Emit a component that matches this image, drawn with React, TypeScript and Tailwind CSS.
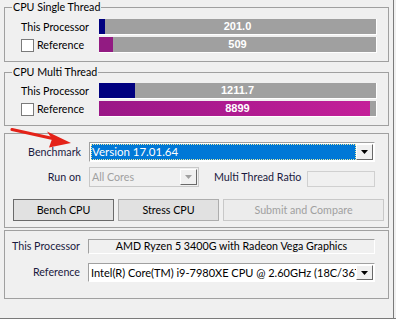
import React from "react";

const ui = "font-['Lato','Liberation_Sans',sans-serif] text-[10.7px]";

type BarData = { fill: number; color: string; value: string };

function Bar({ fill, color, value }: BarData) {
  return (
    <div className="relative h-[16px] w-[278px] shrink-0 border-r border-b border-white bg-[#a0a0a0]">
      <div className="h-full" style={{ width: fill, background: color }} />
      <span className="absolute inset-0 flex items-center justify-center font-['Liberation_Sans',sans-serif] text-[11px] font-bold text-white">
        {value}
      </span>
    </div>
  );
}

function Check() {
  return <span className="inline-block h-[13px] w-[13px] shrink-0 border border-[#7a7a7a] bg-white" />;
}

function Arrow({ disabled }: { disabled?: boolean }) {
  return (
    <svg width="7" height="4" viewBox="0 0 7 4">
      <path d="M0 0H7L3.5 4Z" fill={disabled ? "#a0a0a0" : "#000"} />
    </svg>
  );
}

function DropBtn({ disabled }: { disabled?: boolean }) {
  return (
    <div className="flex h-full w-[17px] shrink-0 items-center justify-center border border-t-white border-l-white border-r-[#696969] border-b-[#696969] bg-[#f0f0f0]">
      <Arrow disabled={disabled} />
    </div>
  );
}

function Group({ title, children, className }: { title?: string; children: React.ReactNode; className?: string }) {
  return (
    <fieldset className={"border border-[#a0a0a0] " + (className ?? "")}>
      {title && <legend className="ml-[7px] px-[1px] leading-[14px] whitespace-nowrap">{title}</legend>}
      {children}
    </fieldset>
  );
}

function BenchRows({ a, b }: { a: BarData; b: BarData }) {
  return (
    <div className="flex flex-col gap-[2px] pl-[16px]">
      <div className="flex h-[16px] items-center whitespace-nowrap">
        <span className="w-[78px] shrink-0">This Processor</span>
        <Bar {...a} />
      </div>
      <div className="flex h-[16px] items-center whitespace-nowrap">
        <Check />
        <span className="ml-[3px] w-[62px] shrink-0">Reference</span>
        <Bar {...b} />
      </div>
    </div>
  );
}

export default function App() {
  return (
    <div className={ui + " relative flex h-[323px] w-[396px] flex-col overflow-hidden bg-[#f0f0f0] text-black"}>
      <div className="mr-[2px] flex flex-1 flex-col border-r border-r-[#7a7a7a] pl-[4px] pr-[4px]">
        <Group title="CPU Single Thread" className="pt-[5px] pb-[8px]">
          <BenchRows
            a={{ fill: 6, color: "#00007f", value: "201.0" }}
            b={{ fill: 14, color: "#921b82", value: "509" }}
          />
        </Group>
        <Group title="CPU Multi Thread" className="mt-[3px] pt-[4px] pb-[8px]">
          <BenchRows
            a={{ fill: 36, color: "#00007f", value: "1211.7" }}
            b={{ fill: 271, color: "linear-gradient(90deg,#9a1787,#c41f99)", value: "8899" }}
          />
        </Group>
        <Group className="mt-[7px] pt-[8px] pb-[6px]">
          <div className="flex h-[20px] items-center whitespace-nowrap">
            <span className="w-[76px] shrink-0 text-right text-[#1a1a40]">Benchmark</span>
            <div className="ml-[8px] flex h-[20px] w-[286px] shrink-0 border border-[#a0a0a0] border-r-white border-b-white bg-white p-[1px]">
              <div className="flex flex-1 items-center bg-[#0078d7] pl-[1px] text-[11.5px] text-white outline outline-1 outline-dotted outline-[#e8e8a0] -outline-offset-1">
                Version 17.01.64
              </div>
              <DropBtn />
            </div>
          </div>
          <div className="mt-[5px] flex h-[20px] items-center whitespace-nowrap">
            <span className="w-[76px] shrink-0 text-right text-[#1a1a40]">Run on</span>
            <div className="ml-[8px] flex h-[20px] w-[110px] shrink-0 border border-[#c8c8c8] bg-[#f0f0f0] p-[1px]">
              <div className="flex flex-1 items-center pl-[1px] text-[#a0a0a0]">All Cores</div>
              <DropBtn disabled />
            </div>
            <span className="ml-[15px] w-[87px] shrink-0 text-[#1a1a40]">Multi Thread Ratio</span>
            <div className="ml-[6px] mt-[4px] h-[16px] w-[68px] shrink-0 border border-[#d0d0d0] bg-[#f0f0f0]" />
          </div>
          <div className="mt-[12px] flex gap-[4px] pl-[8px]">
            <button className="h-[22px] w-[101px] border border-[#6a6a6a] bg-[#e1e1e1]">Bench CPU</button>
            <button className="h-[22px] w-[101px] border border-[#adadad] bg-[#e1e1e1]">Stress CPU</button>
            <button className="h-[22px] w-[161px] border border-[#c8c8c8] bg-[#ececec] text-[#a0a0a0]">Submit and Compare</button>
          </div>
        </Group>
        <Group className="mt-[2px] pt-[8px] pb-[16px]">
          <div className="flex h-[15px] items-center whitespace-nowrap">
            <span className="w-[75px] shrink-0 text-right text-[#1a1a40]">This Processor</span>
            <div className="ml-[8px] flex h-[15px] w-[287px] shrink-0 items-center justify-center border border-[#a0a0a0] border-r-white border-b-white bg-[#f0f0f0]">
              AMD Ryzen 5 3400G with Radeon Vega Graphics
            </div>
          </div>
          <div className="mt-[9px] flex h-[19px] items-center whitespace-nowrap">
            <span className="w-[75px] shrink-0 text-right text-[#1a1a40]">Reference</span>
            <div className="ml-[8px] flex h-[19px] w-[287px] shrink-0 border border-[#a0a0a0] border-r-white border-b-white bg-white p-[1px]">
              <div className="flex-1 overflow-hidden pl-[1px] text-[11px] leading-[15px]">
                Intel(R) Core(TM) i9-7980XE CPU @ 2.60GHz (18C/36T)
              </div>
              <DropBtn />
            </div>
          </div>
        </Group>
      </div>
      <div className="h-[5px] border-t border-t-[#7a7a7a] bg-white" />
      <svg className="pointer-events-none absolute left-0 top-0" width="396" height="323" viewBox="0 0 396 323">
        <path d="M12 129.5 L55 139" stroke="#e42218" strokeWidth="3.2" strokeLinecap="round" fill="none" />
        <path d="M71 143 L47 131.5 L52 139 L49 147.5 Z" fill="#e42218" />
      </svg>
    </div>
  );
}
